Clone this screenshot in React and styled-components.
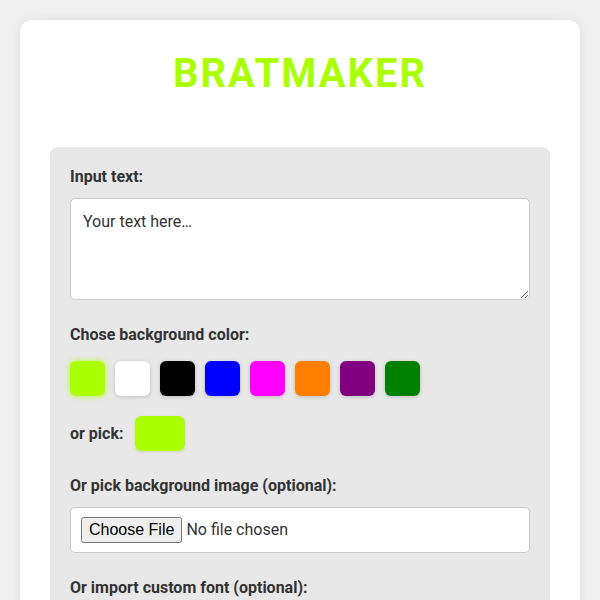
import { useState } from 'react';
import styled, { createGlobalStyle } from 'styled-components';

const COLORS = ['#aaff00', '#ffffff', '#000000', '#0000ff', '#ff00ff', '#ff8000', '#800080', '#008000'];

function App() {
  const [bg, setBg] = useState('#aaff00');
  const [text, setText] = useState('');

  return (
    <>
      <GlobalStyle />
      <Page>
        <Card>
          <Title>BRATMAKER</Title>
          <Panel>
            <Field>
              <Label htmlFor="text">Input text:</Label>
              <TextArea
                id="text"
                placeholder="Your text here…"
                value={text}
                onChange={e => setText(e.target.value)}
              />
            </Field>
            <Field>
              <Label>Chose background color:</Label>
              <Swatches>
                {COLORS.map(c => (
                  <Swatch
                    key={c}
                    type="button"
                    $color={c}
                    $active={c === bg}
                    onClick={() => setBg(c)}
                    aria-label={c}
                  />
                ))}
              </Swatches>
            </Field>
            <PickRow>
              <Label as="span">or pick:</Label>
              <ColorInput type="color" value={bg} onChange={e => setBg(e.target.value)} />
            </PickRow>
            <Field>
              <Label>Or pick background image (optional):</Label>
              <FileBox>
                <input type="file" accept="image/*" />
              </FileBox>
            </Field>
            <Field>
              <Label>Or import custom font (optional):</Label>
              <FileBox>
                <input type="file" accept=".ttf,.otf,.woff" />
              </FileBox>
            </Field>
          </Panel>
        </Card>
      </Page>
    </>
  );
}

const GlobalStyle = createGlobalStyle`
  body {
    margin: 0;
    background: #f0f0f0;
    font-family: Roboto, "Noto Sans", sans-serif;
    color: #333;
  }
`;

const Page = styled.main`
  padding: 20px;
`;

const Card = styled.div`
  background: #fff;
  border-radius: 12px;
  box-shadow: 0 0 12px rgba(0, 0, 0, 0.08);
  padding: 30px;
`;

const Title = styled.h1`
  margin: 0 0 50px;
  text-align: center;
  color: #aaff00;
  font-size: 40px;
  font-weight: 700;
  letter-spacing: 2px;
  line-height: 47px;
`;

const Panel = styled.section`
  background: #e8e8e8;
  border-radius: 8px;
  padding: 20px;
  display: flex;
  flex-direction: column;
  gap: 25px;
`;

const Field = styled.div`
  display: flex;
  flex-direction: column;
  gap: 12px;
`;

const Label = styled.label`
  font-size: 16px;
  font-weight: 700;
  color: #333;
  line-height: 19px;
`;

const TextArea = styled.textarea`
  box-sizing: border-box;
  width: 100%;
  height: 102px;
  padding: 13px 12px 9px;
  border: 1px solid #ccc;
  border-radius: 5px;
  font-family: Roboto, sans-serif;
  font-size: 16px;
  color: #333;
  background: #fff;
  &::placeholder {
    color: #333;
  }
`;

const Swatches = styled.div`
  display: flex;
  gap: 10px;
  margin-top: 5px;
`;

const Swatch = styled.button`
  width: 35px;
  height: 35px;
  padding: 0;
  border: none;
  border-radius: 6px;
  cursor: pointer;
  background: ${p => p.$color};
  box-shadow: ${p => (p.$active ? '0 0 6px rgba(170, 255, 0, 0.8)' : '0 1px 4px rgba(0, 0, 0, 0.18)')};
`;

const PickRow = styled.div`
  display: flex;
  align-items: center;
  gap: 11px;
  margin-top: -5px;
`;

const ColorInput = styled.input`
  appearance: none;
  width: 50px;
  height: 35px;
  padding: 0;
  border: none;
  border-radius: 6px;
  background: none;
  cursor: pointer;
  box-shadow: 0 1px 3px rgba(0, 0, 0, 0.1);
  &::-webkit-color-swatch-wrapper {
    padding: 0;
  }
  &::-webkit-color-swatch {
    border: none;
    border-radius: 6px;
  }
`;

const FileBox = styled.div`
  background: #fff;
  border: 1px solid #ccc;
  border-radius: 5px;
  padding: 9px 10px;
  input {
    font-family: Roboto, sans-serif;
    font-size: 16px;
    color: #333;
  }
  input::file-selector-button {
    padding: 2px 6px;
  }
`;

export default App;
